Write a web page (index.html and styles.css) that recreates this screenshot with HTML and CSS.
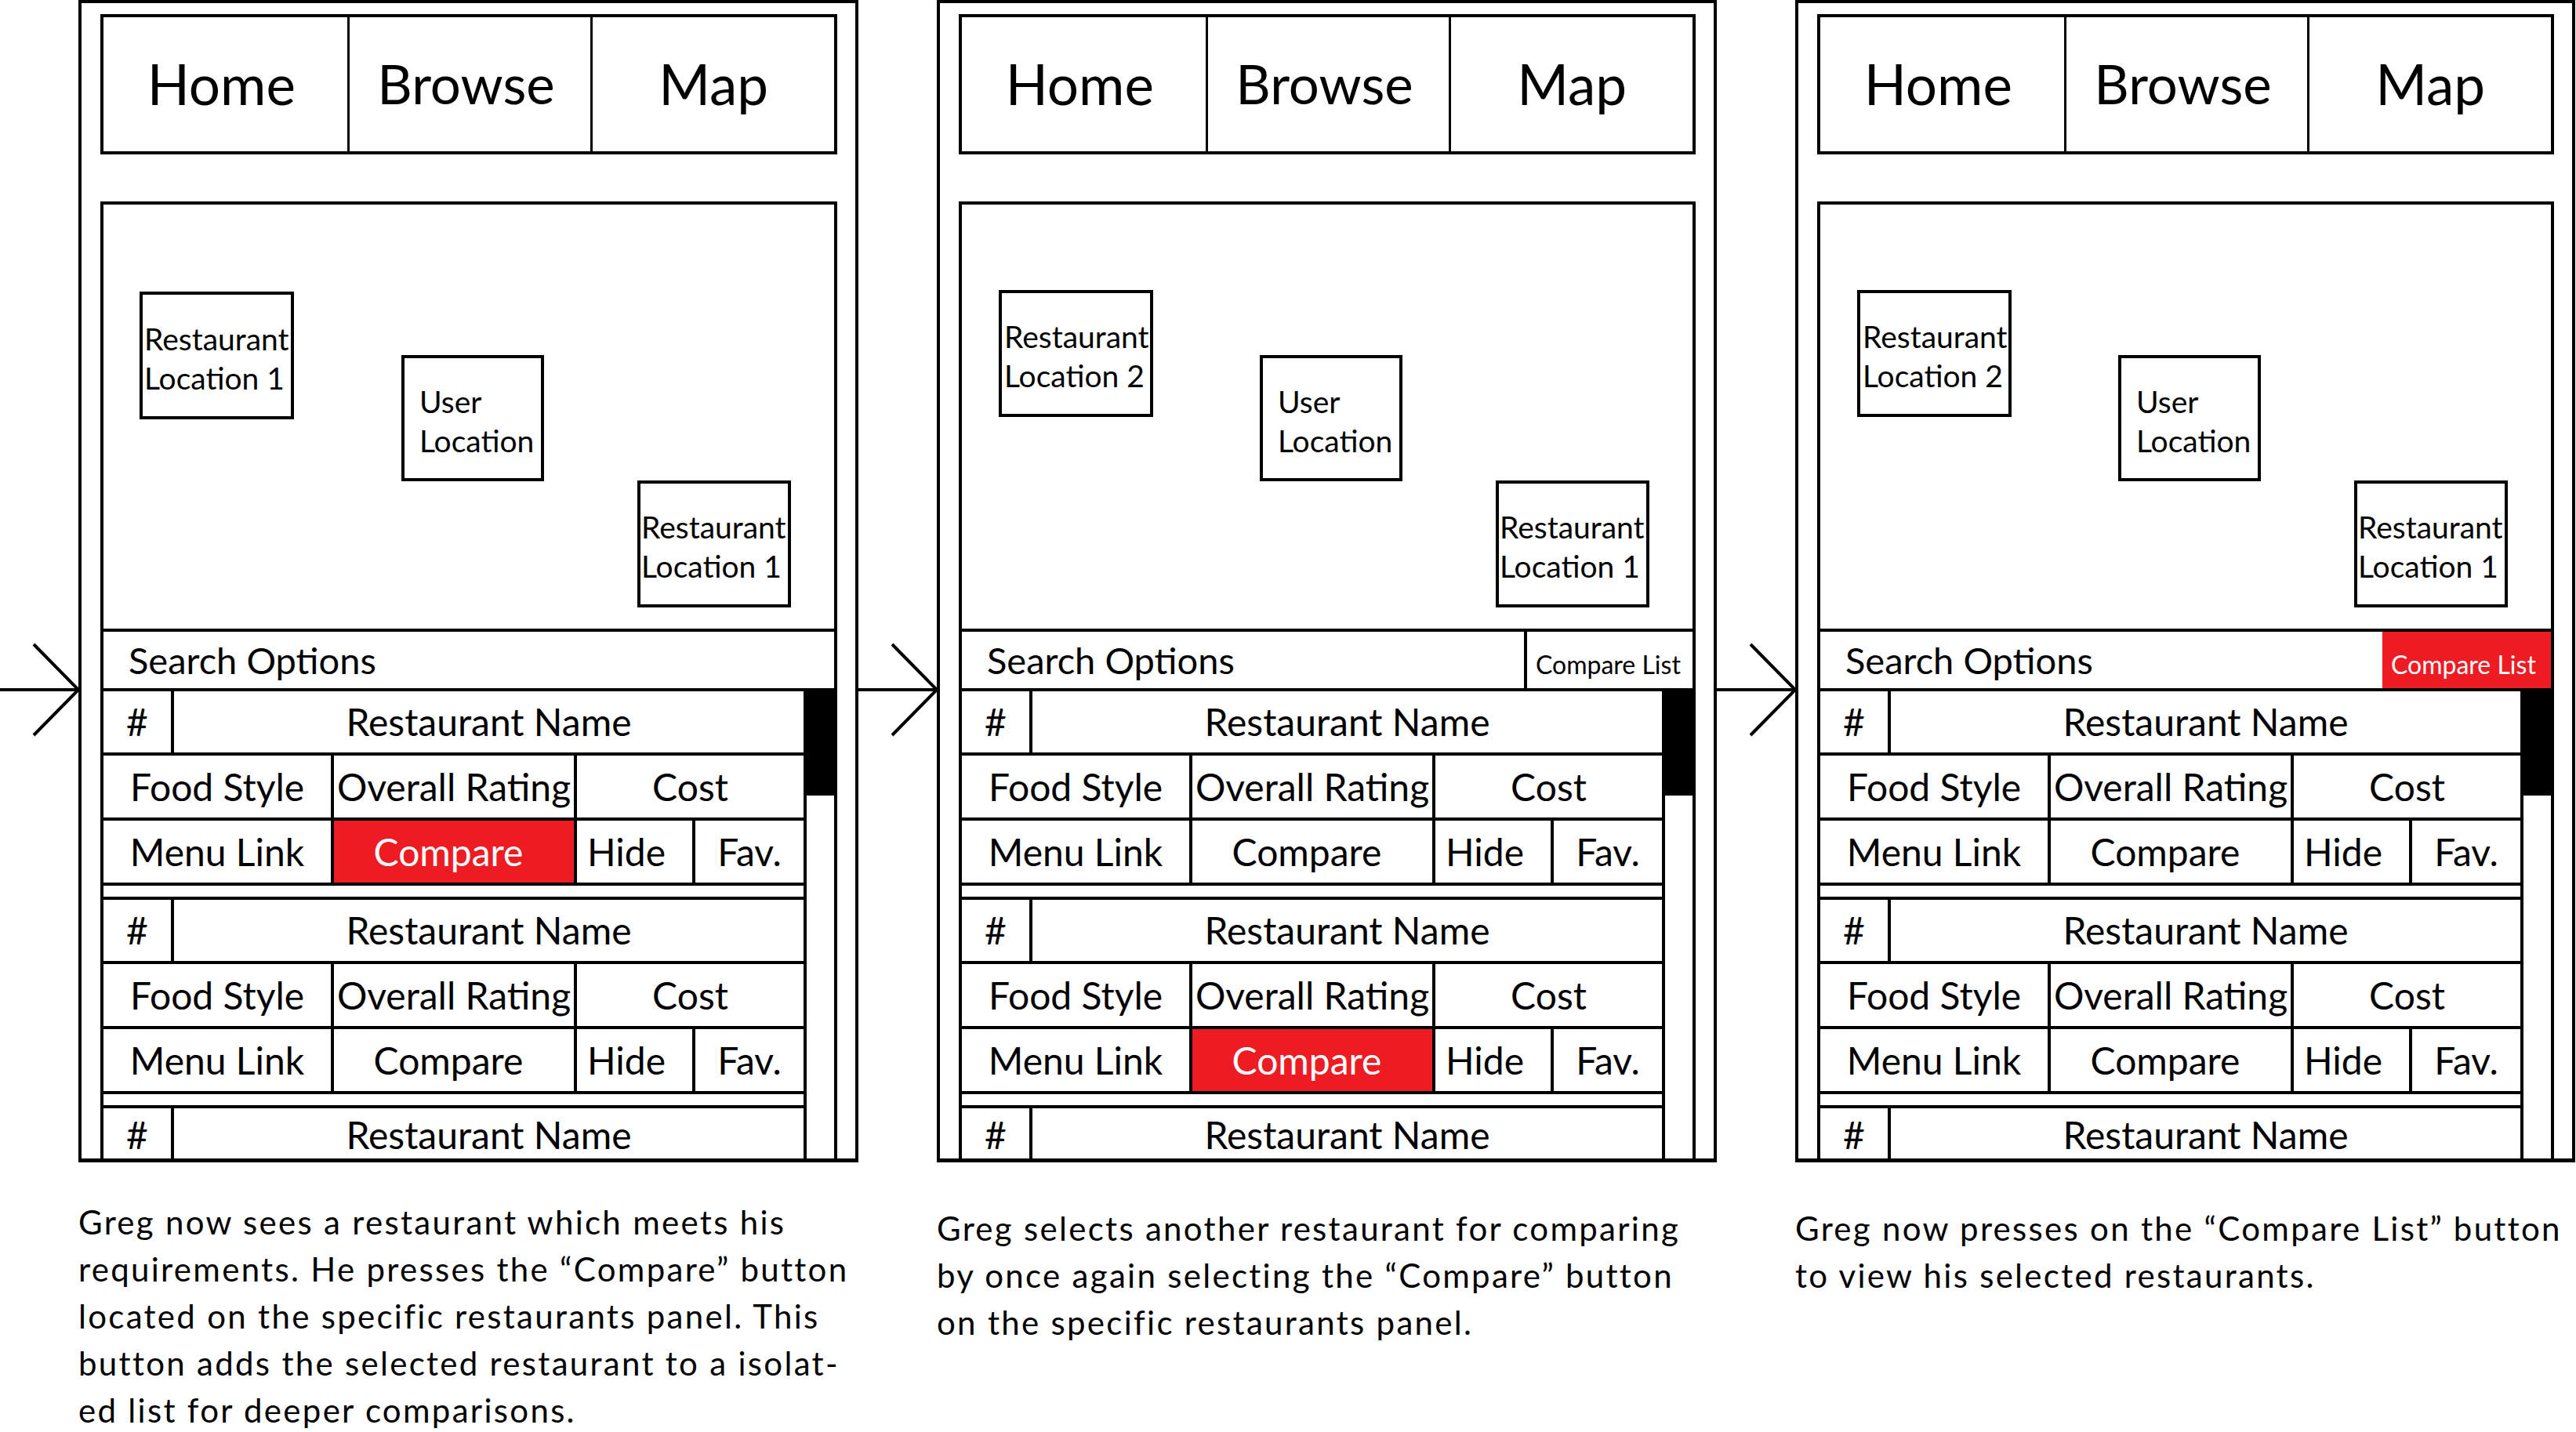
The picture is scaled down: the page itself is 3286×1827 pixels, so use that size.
FILE: index.html
```html
<!DOCTYPE html>
<html lang="en">
<head>
<meta charset="utf-8">
<title>Compare storyboard</title>
<link rel="stylesheet" href="styles.css">
</head>
<body>
<main class="board">

  <div class="arrow arrow--first">
    <svg width="100" height="120" viewBox="0 0 100 120"><path d="M0 60H100M43 2L100 60L43 118"/></svg>
  </div>

  <section class="step">
    <div class="phone">
      <nav class="tabs"><span class="tab">Home</span><span class="tab">Browse</span><span class="tab">Map</span></nav>
      <div class="screen">
        <div class="map">
          <div class="pin pin--a">Restaurant<br>Location 1</div>
          <div class="pin pin--user">User<br>Location</div>
          <div class="pin pin--c">Restaurant<br>Location 1</div>
        </div>
        <div class="search"><span class="search-label">Search Options</span></div>
        <div class="list">
          <div class="cards">
            <div class="card">
              <div class="row row--head"><span class="cell">#</span><span class="cell">Restaurant Name</span></div>
              <div class="row row--info"><span class="cell">Food Style</span><span class="cell">Overall Rating</span><span class="cell">Cost</span></div>
              <div class="row row--actions"><span class="cell">Menu Link</span><span class="cell cell--compare is-on">Compare</span><span class="cell cell--hide">Hide</span><span class="cell">Fav.</span></div>
              <div class="spacer"></div>
            </div>
            <div class="card">
              <div class="row row--head"><span class="cell">#</span><span class="cell">Restaurant Name</span></div>
              <div class="row row--info"><span class="cell">Food Style</span><span class="cell">Overall Rating</span><span class="cell">Cost</span></div>
              <div class="row row--actions"><span class="cell">Menu Link</span><span class="cell cell--compare">Compare</span><span class="cell cell--hide">Hide</span><span class="cell">Fav.</span></div>
              <div class="spacer"></div>
            </div>
            <div class="card">
              <div class="row row--head row--peek"><span class="cell">#</span><span class="cell">Restaurant Name</span></div>
            </div>
          </div>
          <div class="scroll"><div class="thumb"></div></div>
        </div>
      </div>
    </div>
    <p class="caption">Greg now sees a restaurant which meets his<br>requirements. He presses the “Compare” button<br>located on the specific restaurants panel. This<br>button adds the selected restaurant to a isolat-<br>ed list for deeper comparisons.</p>
  </section>

  <div class="arrow">
    <svg width="100" height="120" viewBox="0 0 100 120"><path d="M0 60H100M43 2L100 60L43 118"/></svg>
  </div>

  <section class="step">
    <div class="phone">
      <nav class="tabs"><span class="tab">Home</span><span class="tab">Browse</span><span class="tab">Map</span></nav>
      <div class="screen">
        <div class="map">
          <div class="pin pin--b">Restaurant<br>Location 2</div>
          <div class="pin pin--user">User<br>Location</div>
          <div class="pin pin--c">Restaurant<br>Location 1</div>
        </div>
        <div class="search"><span class="search-label">Search Options</span><span class="compare-list">Compare List</span></div>
        <div class="list">
          <div class="cards">
            <div class="card">
              <div class="row row--head"><span class="cell">#</span><span class="cell">Restaurant Name</span></div>
              <div class="row row--info"><span class="cell">Food Style</span><span class="cell">Overall Rating</span><span class="cell">Cost</span></div>
              <div class="row row--actions"><span class="cell">Menu Link</span><span class="cell cell--compare">Compare</span><span class="cell cell--hide">Hide</span><span class="cell">Fav.</span></div>
              <div class="spacer"></div>
            </div>
            <div class="card">
              <div class="row row--head"><span class="cell">#</span><span class="cell">Restaurant Name</span></div>
              <div class="row row--info"><span class="cell">Food Style</span><span class="cell">Overall Rating</span><span class="cell">Cost</span></div>
              <div class="row row--actions"><span class="cell">Menu Link</span><span class="cell cell--compare is-on">Compare</span><span class="cell cell--hide">Hide</span><span class="cell">Fav.</span></div>
              <div class="spacer"></div>
            </div>
            <div class="card">
              <div class="row row--head row--peek"><span class="cell">#</span><span class="cell">Restaurant Name</span></div>
            </div>
          </div>
          <div class="scroll"><div class="thumb"></div></div>
        </div>
      </div>
    </div>
    <p class="caption caption--low">Greg selects another restaurant for comparing<br>by once again selecting the “Compare” button<br>on the specific restaurants panel.</p>
  </section>

  <div class="arrow">
    <svg width="100" height="120" viewBox="0 0 100 120"><path d="M0 60H100M43 2L100 60L43 118"/></svg>
  </div>

  <section class="step">
    <div class="phone">
      <nav class="tabs"><span class="tab">Home</span><span class="tab">Browse</span><span class="tab">Map</span></nav>
      <div class="screen">
        <div class="map">
          <div class="pin pin--b">Restaurant<br>Location 2</div>
          <div class="pin pin--user">User<br>Location</div>
          <div class="pin pin--c">Restaurant<br>Location 1</div>
        </div>
        <div class="search"><span class="search-label">Search Options</span><span class="compare-list is-on">Compare List</span></div>
        <div class="list">
          <div class="cards">
            <div class="card">
              <div class="row row--head"><span class="cell">#</span><span class="cell">Restaurant Name</span></div>
              <div class="row row--info"><span class="cell">Food Style</span><span class="cell">Overall Rating</span><span class="cell">Cost</span></div>
              <div class="row row--actions"><span class="cell">Menu Link</span><span class="cell cell--compare">Compare</span><span class="cell cell--hide">Hide</span><span class="cell">Fav.</span></div>
              <div class="spacer"></div>
            </div>
            <div class="card">
              <div class="row row--head"><span class="cell">#</span><span class="cell">Restaurant Name</span></div>
              <div class="row row--info"><span class="cell">Food Style</span><span class="cell">Overall Rating</span><span class="cell">Cost</span></div>
              <div class="row row--actions"><span class="cell">Menu Link</span><span class="cell cell--compare">Compare</span><span class="cell cell--hide">Hide</span><span class="cell">Fav.</span></div>
              <div class="spacer"></div>
            </div>
            <div class="card">
              <div class="row row--head row--peek"><span class="cell">#</span><span class="cell">Restaurant Name</span></div>
            </div>
          </div>
          <div class="scroll"><div class="thumb"></div></div>
        </div>
      </div>
    </div>
    <p class="caption caption--low">Greg now presses on the “Compare List” button<br>to view his selected restaurants.</p>
  </section>

</main>
</body>
</html>
```

FILE: styles.css
```css
html, body {
  margin: 0;
  padding: 0;
  background: #ffffff;
}

body {
  font-family: Lato, "Open Sans", "Liberation Sans", sans-serif;
  color: #000000;
  overflow: hidden;
}

.board {
  display: flex;
  align-items: flex-start;
  width: 3286px;
}

/* connecting arrows between the storyboard frames */
.arrow {
  flex: 0 0 100px;
  padding-top: 820px;
}

.arrow--first {
  flex-basis: 99px;
}

.arrow svg {
  display: block;
  overflow: visible;
}

.arrow path {
  fill: none;
  stroke: #000000;
  stroke-width: 4;
}

/* one storyboard step: phone wireframe + caption */
.step {
  flex: 0 0 995px;
  width: 995px;
  min-width: 0;
  display: flex;
  flex-direction: column;
}

.phone {
  box-sizing: border-box;
  height: 1483px;
  border: 4px solid #000000;
  border-bottom-width: 5px;
  padding: 14px 23px 0 24px;
  display: flex;
  flex-direction: column;
}

.tabs {
  flex: none;
  box-sizing: border-box;
  height: 179px;
  border: 4px solid #000000;
  display: grid;
  grid-template-columns: repeat(3, 1fr);
}

.tab {
  display: flex;
  align-items: center;
  justify-content: center;
  font-size: 71px;
  line-height: 1;
  padding-bottom: 2px;
}

.tab:first-child {
  padding-right: 10px;
}

.tab:nth-child(2) {
  font-size: 69px;
  padding-right: 10px;
}

.tab + .tab {
  border-left: 3px solid #000000;
}

.screen {
  flex: 1;
  min-height: 0;
  margin-top: 60px;
  border: 4px solid #000000;
  border-bottom: 0;
  display: flex;
  flex-direction: column;
  overflow: hidden;
}

/* map canvas with location pins */
.map {
  flex: none;
  position: relative;
  height: 541px;
}

.pin {
  position: absolute;
  box-sizing: border-box;
  border: 4px solid #000000;
  display: flex;
  flex-direction: column;
  justify-content: center;
  font-size: 39px;
  line-height: 50px;
  white-space: nowrap;
  padding-top: 6px;
}

.pin--a {
  left: 46px;
  top: 111px;
  width: 197px;
  height: 163px;
  padding-left: 2px;
}

.pin--b {
  left: 47px;
  top: 109px;
  width: 197px;
  height: 162px;
  padding-left: 3px;
}

.pin--user {
  left: 380px;
  top: 192px;
  width: 182px;
  height: 161px;
  padding-left: 19px;
}

.pin--c {
  left: 681px;
  top: 352px;
  width: 196px;
  height: 162px;
  padding-left: 1px;
}

/* search options bar */
.search {
  flex: none;
  height: 72px;
  border-top: 4px solid #000000;
  border-bottom: 4px solid #000000;
  display: flex;
}

.search-label {
  flex: 1;
  display: flex;
  align-items: center;
  padding-left: 32px;
  font-size: 47px;
  line-height: 1;
}

.compare-list {
  box-sizing: border-box;
  flex: 0 0 215px;
  border-left: 4px solid #000000;
  display: flex;
  align-items: center;
  padding: 11px 0 0 11px;
  font-size: 32px;
  line-height: 1;
  white-space: nowrap;
}

.compare-list.is-on {
  background: #ed1c24;
  color: #ffffff;
  border-left-color: #ed1c24;
  padding-left: 7px;
}

/* restaurant list */
.list {
  flex: 1;
  min-height: 0;
  display: flex;
  overflow: hidden;
}

.cards {
  flex: 1;
  min-width: 0;
}

.scroll {
  flex: 0 0 39px;
  box-sizing: border-box;
  border-left: 4px solid #000000;
}

.thumb {
  height: 133px;
  margin-left: -4px;
  background: #000000;
}

.row {
  display: grid;
  border-bottom: 4px solid #000000;
  font-size: 48px;
  line-height: 1;
}

.row--head {
  height: 78px;
  grid-template-columns: 86px 1fr;
}

.row--info {
  height: 79px;
  grid-template-columns: 290px 310px 1fr;
}

.row--actions {
  height: 79px;
  grid-template-columns: 290px 310px 151px 1fr;
}

/* last card, only partly scrolled into view */
.row--peek {
  height: 64px;
  border-bottom: 0;
}

.row--peek .cell {
  align-items: flex-start;
  padding-top: 10px;
}

.spacer {
  height: 14px;
  border-bottom: 4px solid #000000;
}

.cell {
  display: flex;
  align-items: center;
  justify-content: center;
  white-space: nowrap;
}

.cell + .cell {
  border-left: 4px solid #000000;
}

.cell--compare {
  padding-right: 14px;
}

.cell--hide {
  justify-content: flex-start;
  padding-left: 13px;
}

.cell.is-on {
  background: #ed1c24;
  color: #ffffff;
}

/* captions */
.caption {
  margin: 46px 0 0;
  font-size: 42px;
  line-height: 60px;
  letter-spacing: 2.3px;
  white-space: nowrap;
}

.caption--low {
  margin-top: 54px;
}
```
